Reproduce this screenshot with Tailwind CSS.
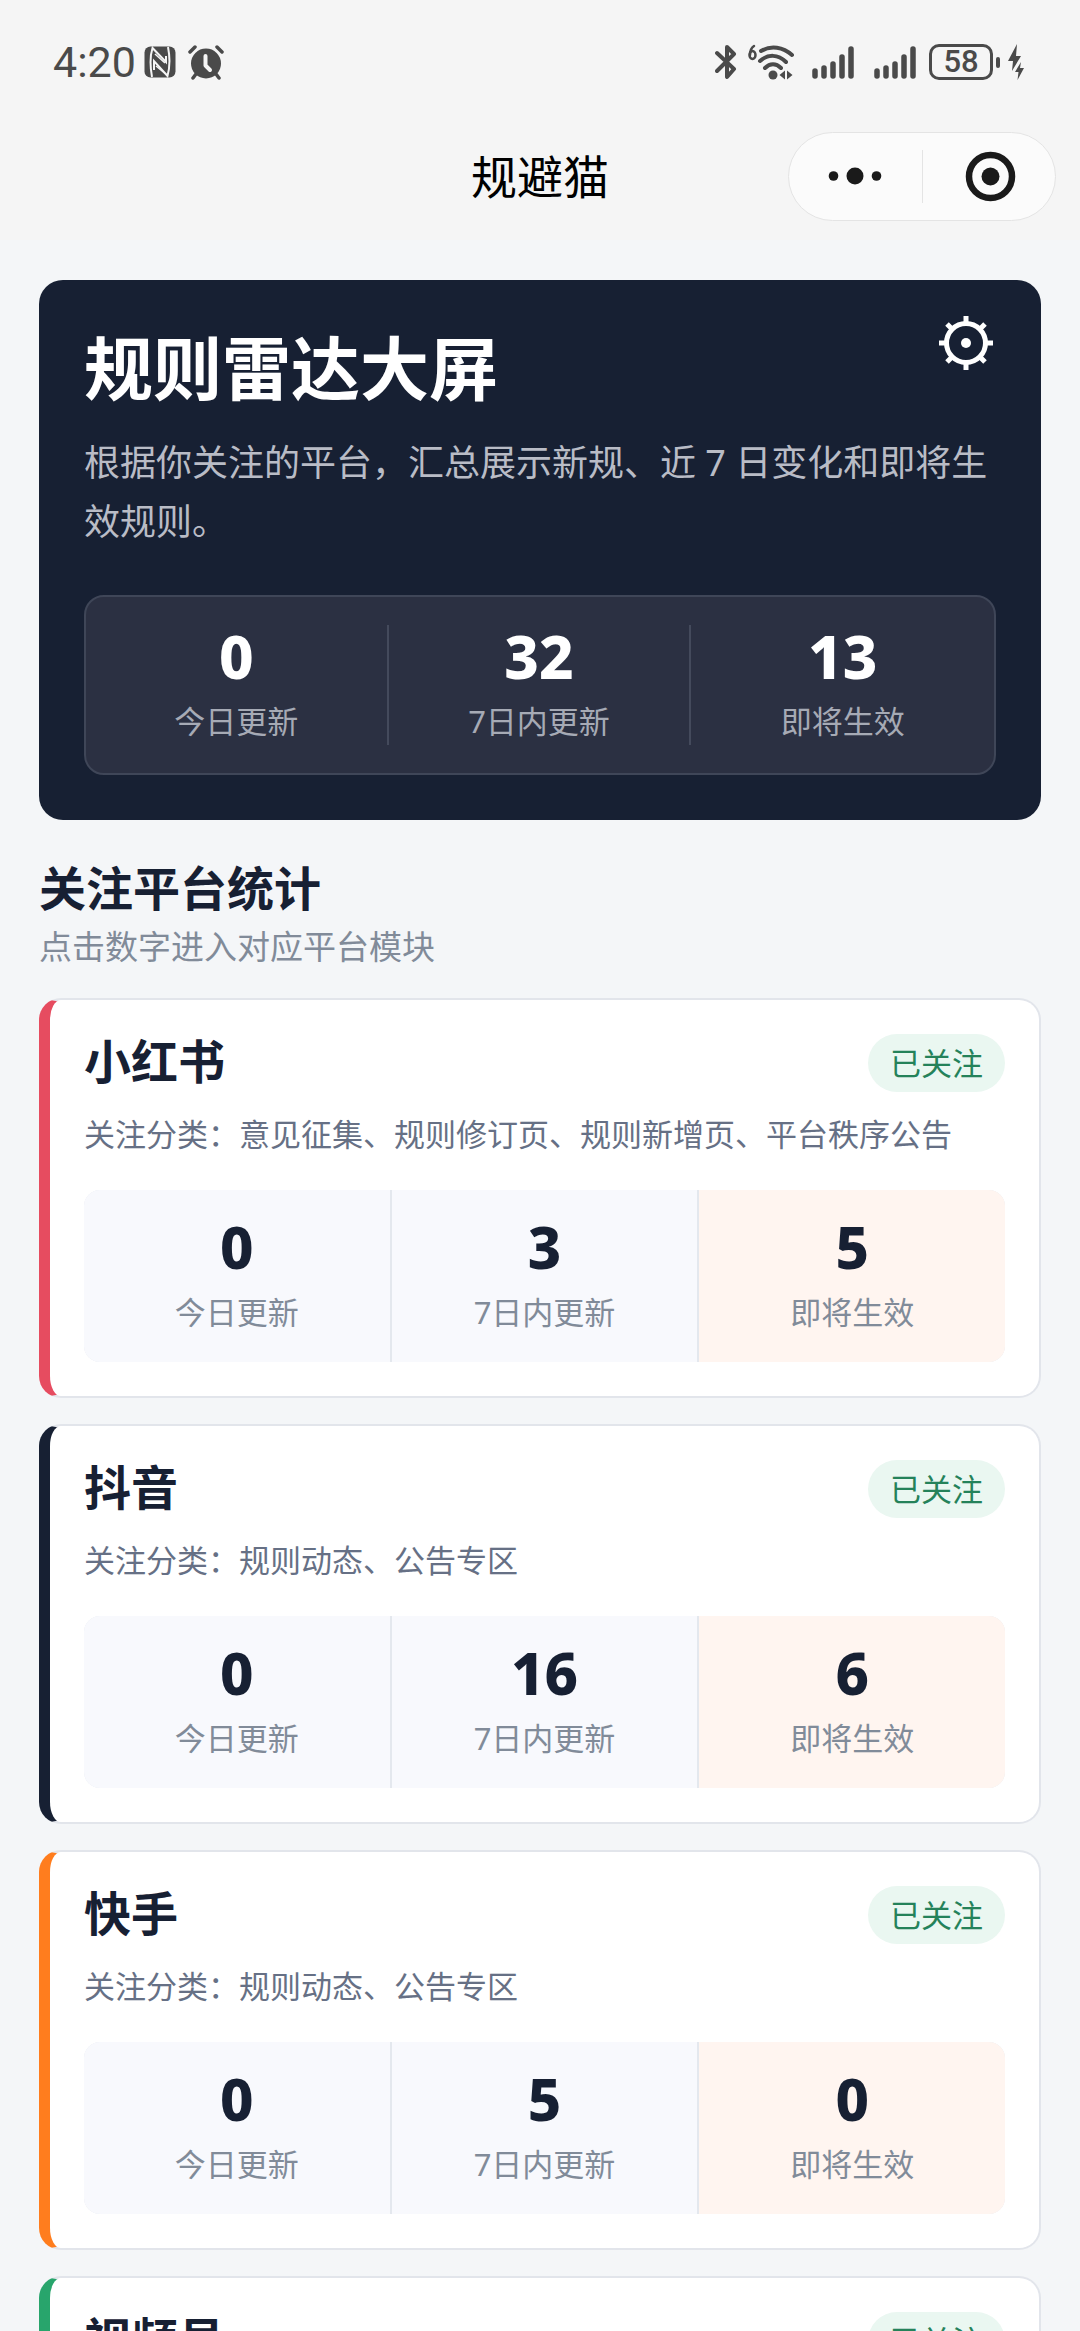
<!DOCTYPE html>
<html lang="zh-CN">

<head>
    <meta charset="utf-8" />
    <meta content="width=device-width, initial-scale=1.0" name="viewport" />
    <title>规避猫</title>
    <script src="https://cdn.jsdelivr.net/npm/@tailwindcss/browser@4"></script>
</head>

<body class="bg-[#f4f6f8] text-[#172033] font-['Noto_Sans','Noto_Sans_CJK_SC',sans-serif]">
    <div class="h-screen flex flex-col">
        <!-- Status bar -->
        <div class="h-[124px] shrink-0 bg-[#f5f5f5] text-[#4a4a4a] flex items-center justify-between pl-[53px] pr-14">
            <div class="flex items-center">
                <span class="font-[Roboto] text-[43px] leading-[44px]">4:20</span>
                <!-- NFC -->
                <svg class="ml-2 w-8 h-8" viewBox="0 0 32 32" fill="none">
                    <rect x="0.5" y="0.5" width="31" height="31" rx="6" fill="currentColor" />
                    <path d="M8 31C6 20 6 10 8.500 2L22 16V10M24 1c2 10 2 20-.5 29L10 15v9" stroke="#f5f5f5" stroke-width="2" />
                    <path d="M11 8l10 9M12 20l11 9" stroke="#f5f5f5" stroke-width="1.500" />
                </svg>
                <!-- Alarm -->
                <svg class="ml-3 w-9 h-9" viewBox="0 0 36 36" fill="none" stroke-linecap="round">
                    <circle cx="18" cy="19.500" r="15" fill="currentColor" />
                    <path d="M2 8l5-5M34 8l-5-5M8 30l-3 4M28 30l3 4" stroke="currentColor" stroke-width="3.500" />
                    <path d="M17.500 12v9.500l4.500 4.500" stroke="#f5f5f5" stroke-width="4" stroke-linejoin="round" />
                </svg>
            </div>
            <div class="flex items-center">
                <!-- Bluetooth -->
                <svg class="w-[22px] h-9" viewBox="0 0 22 36" fill="none" stroke="currentColor" stroke-width="4" stroke-linecap="round" stroke-linejoin="round">
                    <path d="M2 9l17 16-7 8V3l7 7L2 27" />
                </svg>
                <!-- Wi-Fi 6 -->
                <svg class="ml-[10px] w-12 h-9" viewBox="0 0 48 36" fill="none" stroke="currentColor" stroke-width="4" stroke-linecap="round">
                    <path d="M7 2C4 4 3 7 3 11" stroke-width="2.500" />
                    <ellipse cx="5.500" cy="11" rx="3" ry="4" stroke-width="2.500" />
                    <path d="M14 7c10-6 22-4 31 4M13 17c8-7 18-7 26 1M18 24c5-5 11-5 16 0" />
                    <circle cx="26" cy="31" r="4.500" fill="currentColor" stroke="none" />
                    <path d="M38 26.500v9l-5.500-4.500zM40 26.500v9l5.500-4.500z" fill="currentColor" stroke="none" />
                </svg>
                <!-- Signal, SIM 1 -->
                <svg class="ml-[17px] w-[42px] h-9" viewBox="0 0 42 36" stroke="currentColor" stroke-width="5.500" stroke-linecap="round">
                    <path d="M3 27v5M12 24v8M21 20v12M30 13v19M39 5v27" />
                </svg>
                <!-- Signal, SIM 2 -->
                <svg class="ml-5 w-[42px] h-9" viewBox="0 0 42 36" stroke="currentColor" stroke-width="5.500" stroke-linecap="round">
                    <path d="M3 27v5M12 24v8M21 20v12M30 13v19M39 5v27" />
                </svg>
                <!-- Battery -->
                <div class="ml-[13px] w-16 h-9 rounded-[10px] border-[3px] border-[#4a4a4a] flex items-center justify-center font-[Roboto] font-medium text-[31px] leading-[30px]">58</div>
                <div class="ml-[3px] w-1 h-[11px] rounded-full bg-[#4a4a4a]"></div>
                <svg class="ml-2 w-4 h-9" viewBox="0 0 16 36" fill="currentColor">
                    <path d="M9 0L0 17h5L4 27l9-15H8zM13 18L7 28h3.500L9.500 36l6.500-12h-4z" />
                </svg>
            </div>
        </div>

        <!-- Navigation bar -->
        <header class="h-[116px] shrink-0 bg-[#f5f5f5] grid grid-cols-[1fr_auto_1fr] items-center px-6 pb-3">
            <h1 class="col-start-2 text-[46px] leading-[60px] text-black">规避猫</h1>
            <div class="justify-self-end w-[268px] h-[89px] rounded-full border border-[#e4e4e4] bg-[#fbfbfb] flex items-center text-[#1a1a1a]">
                <button class="flex-1 flex justify-center" aria-label="更多">
                    <svg class="w-14 h-14" viewBox="0 0 56 56" fill="currentColor">
                        <circle cx="6.500" cy="28" r="4.800" />
                        <circle cx="28" cy="28" r="8.500" />
                        <circle cx="49.500" cy="28" r="4.800" />
                    </svg>
                </button>
                <span class="w-px h-[53px] bg-[#e4e4e4]"></span>
                <button class="flex-1 flex justify-center" aria-label="关闭">
                    <svg class="w-14 h-14" viewBox="0 0 56 56" fill="none">
                        <circle cx="29.500" cy="28.500" r="21.500" stroke="currentColor" stroke-width="6.500" />
                        <circle cx="29.500" cy="28.500" r="9" fill="currentColor" />
                    </svg>
                </button>
            </div>
        </header>

        <main class="flex-1 min-h-0 overflow-y-auto [scrollbar-width:none] px-[39px] py-10">
            <!-- Summary -->
            <section class="bg-[#172033] text-white rounded-3xl px-[45px] pt-[33px] pb-[45px]">
                <div class="flex items-start justify-between">
                    <h2 class="mt-3 text-[69px] leading-[86px] font-bold">规则雷达大屏</h2>
                    <button aria-label="设置">
                        <svg class="w-[60px] h-[60px]" viewBox="0 0 60 60" fill="none" stroke="currentColor" stroke-width="5">
                            <circle cx="30" cy="30" r="19.500" />
                            <path d="M30 3v7M30 50v7M3 30h7M50 30h7M11 11l5 5M49 11l-5 5M11 49l5-5M49 49l-5-5" />
                            <circle cx="30" cy="30" r="5" fill="currentColor" stroke="none" />
                        </svg>
                    </button>
                </div>
                <p class="mt-[22px] text-[36px] leading-[59px] text-[#b9bcc6]">根据你关注的平台，汇总展示新规、近 7 日变化和即将生效规则。</p>
                <div class="mt-11 grid grid-cols-3 rounded-[20px] border-2 border-[#3f4658] bg-[#2b3042] py-7 text-center">
                    <div class="h-[120px] border-r-2 border-[#444a5c]">
                        <div class="text-[60px] leading-[62px] font-extrabold">0</div>
                        <div class="mt-[13px] text-[31px] leading-[42px] text-[#a6aab5]">今日更新</div>
                    </div>
                    <div class="h-[120px] border-r-2 border-[#444a5c]">
                        <div class="text-[60px] leading-[62px] font-extrabold">32</div>
                        <div class="mt-[13px] text-[31px] leading-[42px] text-[#a6aab5]">7日内更新</div>
                    </div>
                    <div class="h-[120px]">
                        <div class="text-[60px] leading-[62px] font-extrabold">13</div>
                        <div class="mt-[13px] text-[31px] leading-[42px] text-[#a6aab5]">即将生效</div>
                    </div>
                </div>
            </section>

            <h2 class="mt-[38px] text-[47px] leading-[60px] font-bold">关注平台统计</h2>
            <p class="mt-[9px] text-[33px] leading-[40px] text-[#818b99]">点击数字进入对应平台模块</p>

            <div id="platformList" class="mt-[31px] flex flex-col gap-[26px]">
                <!-- Cards will be populated dynamically here -->
            </div>
        </main>
    </div>

    <script>
        const platforms = [
            { name: '小红书', border: 'border-l-[#e64c60]', categories: '意见征集、规则修订页、规则新增页、平台秩序公告', today: 0, week: 3, upcoming: 5 },
            { name: '抖音', border: 'border-l-[#172033]', categories: '规则动态、公告专区', today: 0, week: 16, upcoming: 6 },
            { name: '快手', border: 'border-l-[#ff7d1e]', categories: '规则动态、公告专区', today: 0, week: 5, upcoming: 0 },
            { name: '视频号', border: 'border-l-[#28a56c]', categories: '规则动态、公告专区', today: 0, week: 8, upcoming: 2 }
        ];

        // Render one card per followed platform
        document.getElementById('platformList').innerHTML = platforms.map(platform => `
            <article class="bg-white rounded-[22px] border-2 border-l-[11px] border-[#e2e5eb] ${platform.border} p-[34px]">
                <div class="flex items-start justify-between">
                    <h3 class="text-[47px] leading-[54px] font-bold">${platform.name}</h3>
                    <span class="rounded-full bg-[#eaf7f1] px-[22px] text-[31px] leading-[58px] text-[#25825a]">已关注</span>
                </div>
                <p class="mt-[18px] text-[31px] leading-[48px] text-[#667085]">关注分类：${platform.categories}</p>
                <div class="mt-8 grid grid-cols-3 gap-0.5 rounded-2xl overflow-hidden bg-[#e4e8ee]">
                    <button class="bg-[#f8f9fd] pt-[27px] pb-[29px]">
                        <span class="block text-[58px] leading-[60px] font-extrabold">${platform.today}</span>
                        <span class="block mt-[14px] text-[31px] leading-[42px] text-[#818b99]">今日更新</span>
                    </button>
                    <button class="bg-[#f8f9fd] pt-[27px] pb-[29px]">
                        <span class="block text-[58px] leading-[60px] font-extrabold">${platform.week}</span>
                        <span class="block mt-[14px] text-[31px] leading-[42px] text-[#818b99]">7日内更新</span>
                    </button>
                    <button class="bg-[#fff5f0] pt-[27px] pb-[29px]">
                        <span class="block text-[58px] leading-[60px] font-extrabold">${platform.upcoming}</span>
                        <span class="block mt-[14px] text-[31px] leading-[42px] text-[#818b99]">即将生效</span>
                    </button>
                </div>
            </article>
        `).join('');
    </script>
</body>

</html>
